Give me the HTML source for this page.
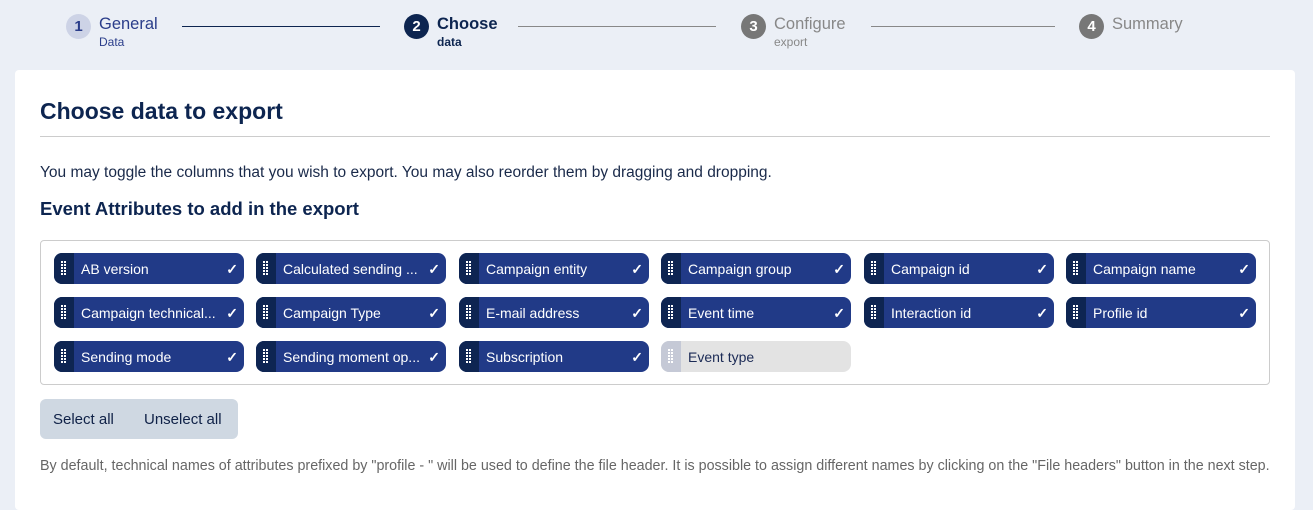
<!DOCTYPE html><html><head><style>
body{margin:0;width:1313px;height:501px;background:#ebeff6;font-family:"Liberation Sans",sans-serif;overflow:hidden;position:relative;color:#0f2147}
.a{position:absolute}
.c{position:absolute;width:25px;height:25px;border-radius:50%;top:14px;text-align:center;line-height:25px;font-weight:bold;font-size:15px;color:#fff}
.t{position:absolute;top:14px;font-size:16.5px;line-height:20px}
.s{position:absolute;top:35px;font-size:12px;line-height:14px}
.l{position:absolute;top:26px;height:1px}
.card{position:absolute;left:15px;top:70px;width:1280px;height:440px;background:#fff;border-radius:4px}
.chip{position:absolute;width:190px;height:31px;border-radius:8px;background:#213a87;color:#fff;font-size:14px;line-height:32px;overflow:hidden}
.chip .h{position:absolute;left:0;top:0;width:20px;height:31px;background:#0e2552}
.chip .h:before,.chip .h:after{content:"";position:absolute;top:8px;width:2px;height:15px;background:repeating-linear-gradient(#fff 0 2px,transparent 2px 3px)}
.chip .h:before{left:7px}.chip .h:after{left:10px}
.chip .n{position:absolute;left:27px}
.chip .k{position:absolute;right:6px;font-size:14px;font-weight:bold}
.chip.off{background:#e3e3e3;color:#1b2a55}.chip.off .h{background:#c5c9d6}
</style></head><body>
<div class="c" style="left:66px;background:#cdd3e6;color:#2a3d8a">1</div>
<div class="t" style="left:99px;color:#2a3d8a">General</div><div class="s" style="left:99px;color:#2a3d8a">Data</div>
<div class="l" style="left:182px;width:198px;background:#0d2550"></div>
<div class="c" style="left:404px;background:#0d2550">2</div>
<div class="t" style="left:437px;font-weight:bold;color:#0d2550">Choose</div><div class="s" style="left:437px;font-weight:bold;color:#0d2550">data</div>
<div class="l" style="left:518px;width:198px;background:#888"></div>
<div class="c" style="left:741px;background:#777">3</div>
<div class="t" style="left:774px;color:#888">Configure</div><div class="s" style="left:774px;color:#888">export</div>
<div class="l" style="left:871px;width:184px;background:#888"></div>
<div class="c" style="left:1079px;background:#777">4</div>
<div class="t" style="left:1112px;color:#888">Summary</div>
<div class="card"></div>
<div class="a" style="left:40px;top:98px;font-size:23px;font-weight:bold;color:#0d2550">Choose data to export</div>
<div class="a" style="left:40px;top:136px;width:1230px;height:1px;background:#ccc"></div>
<div class="a" style="left:40px;top:164px;font-size:15.5px;color:#1a2a4a">You may toggle the columns that you wish to export. You may also reorder them by dragging and dropping.</div>
<div class="a" style="left:40px;top:198px;font-size:18.5px;font-weight:bold;color:#0d2550">Event Attributes to add in the export</div>
<div class="a" style="left:40px;top:240px;width:1228px;height:143px;border:1px solid #ccc;border-radius:4px"></div>
<div class="chip" style="left:54px;top:253px"><i class="h"></i><span class="n">AB version</span><span class="k">✓</span></div>
<div class="chip" style="left:256px;top:253px"><i class="h"></i><span class="n">Calculated sending ...</span><span class="k">✓</span></div>
<div class="chip" style="left:459px;top:253px"><i class="h"></i><span class="n">Campaign entity</span><span class="k">✓</span></div>
<div class="chip" style="left:661px;top:253px"><i class="h"></i><span class="n">Campaign group</span><span class="k">✓</span></div>
<div class="chip" style="left:864px;top:253px"><i class="h"></i><span class="n">Campaign id</span><span class="k">✓</span></div>
<div class="chip" style="left:1066px;top:253px"><i class="h"></i><span class="n">Campaign name</span><span class="k">✓</span></div>
<div class="chip" style="left:54px;top:297px"><i class="h"></i><span class="n">Campaign technical...</span><span class="k">✓</span></div>
<div class="chip" style="left:256px;top:297px"><i class="h"></i><span class="n">Campaign Type</span><span class="k">✓</span></div>
<div class="chip" style="left:459px;top:297px"><i class="h"></i><span class="n">E-mail address</span><span class="k">✓</span></div>
<div class="chip" style="left:661px;top:297px"><i class="h"></i><span class="n">Event time</span><span class="k">✓</span></div>
<div class="chip" style="left:864px;top:297px"><i class="h"></i><span class="n">Interaction id</span><span class="k">✓</span></div>
<div class="chip" style="left:1066px;top:297px"><i class="h"></i><span class="n">Profile id</span><span class="k">✓</span></div>
<div class="chip" style="left:54px;top:341px"><i class="h"></i><span class="n">Sending mode</span><span class="k">✓</span></div>
<div class="chip" style="left:256px;top:341px"><i class="h"></i><span class="n">Sending moment op...</span><span class="k">✓</span></div>
<div class="chip" style="left:459px;top:341px"><i class="h"></i><span class="n">Subscription</span><span class="k">✓</span></div>
<div class="chip off" style="left:661px;top:341px"><i class="h"></i><span class="n">Event type</span></div>
<div class="a" style="left:40px;top:399px;width:198px;height:40px;background:#cfd8e2;border-radius:6px;font-size:15px;line-height:42px;color:#0f2147"><span style="position:absolute;left:13px">Select all</span><span style="position:absolute;left:104px">Unselect all</span></div>
<div class="a" style="left:40px;top:458px;font-size:14.3px;color:#666;white-space:nowrap">By default, technical names of attributes prefixed by "profile - " will be used to define the file header. It is possible to assign different names by clicking on the "File headers" button in the next step.</div>
</body></html>
